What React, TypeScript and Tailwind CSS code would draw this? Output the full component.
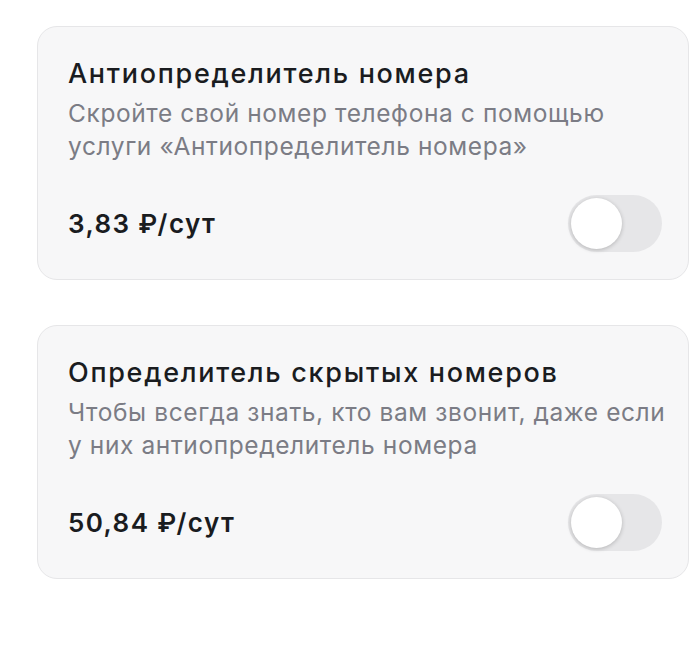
const services = [
  {
    title: "Антиопределитель номера",
    text: ["Скройте свой номер телефона с помощью", "услуги «Антиопределитель номера»"],
    price: "3,83 ₽/сут",
  },
  {
    title: "Определитель скрытых номеров",
    text: ["Чтобы всегда знать, кто вам звонит, даже если", "у них антиопределитель номера"],
    price: "50,84 ₽/сут",
  },
];

const Toggle = () => {
  return (
    <div className="w-[94px] h-[57px] rounded-full bg-[#e6e6e8] p-[3px] flex items-center shrink-0">
      <div className="w-[51px] h-[51px] rounded-full bg-white shadow-[0_1px_4px_rgba(0,0,0,0.22)]"></div>
    </div>
  );
};

export default function App() {
  return (
    <div
      className="w-[700px] h-[645px] bg-white pt-[26px] pl-[37px] flex flex-col gap-[45px]"
      style={{ fontFamily: "Inter, 'Noto Sans', sans-serif" }}
    >
      {services.map((s) => (
        <div
          key={s.title}
          className="w-[652px] h-[254px] rounded-[20px] border border-[#e6e6e8] bg-[#f7f7f8] pt-[30px] pl-[30px] pr-[26px] flex flex-col"
        >
          <h2 className="text-[27px] leading-[34px] font-medium text-[#1a1c1f] tracking-[1.7px] whitespace-nowrap">
            {s.title}
          </h2>
          <p className="mt-[6px] text-[24.5px] leading-[33px] text-[#7b7c85] tracking-[0.6px] whitespace-nowrap">
            {s.text[0]}
            <br />
            {s.text[1]}
          </p>
          <div className="mt-[32px] flex items-center justify-between">
            <span className="text-[26px] font-semibold text-[#1a1c1f] tracking-[1.4px]">
              {s.price}
            </span>
            <Toggle />
          </div>
        </div>
      ))}
    </div>
  );
}
